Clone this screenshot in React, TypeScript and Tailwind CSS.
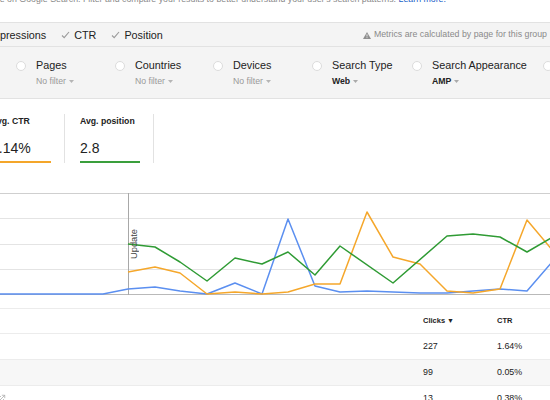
import React from 'react';
import { ExternalLink } from 'lucide-react';

const FONT = { fontFamily: '"Liberation Sans", Arial, Helvetica, sans-serif' };

const CLICKS = '0,295 23,295 50,295 76,295 103,295 128,290 155,288 180,292 207,295 235,284 262,295 288,220 315,287 340,293 367,292 393,293 420,294 447,294 473,292 500,290 527,292 553,262';
const CTR = '128,273 155,268 180,274 207,295 235,293 262,295 288,293 315,285 340,285 367,213 393,258 420,265 447,292 473,294 500,290 527,221 553,252';
const POSITION = '128,245 155,248 180,263 207,282 235,259 262,265 288,253 315,276 340,247 393,284 447,237 473,235 500,238 527,253 553,238';

const filters = [
  { label: 'Pages', value: 'No filter', active: false, width: 'w-[99px]' },
  { label: 'Countries', value: 'No filter', active: false, width: 'w-[98px]' },
  { label: 'Devices', value: 'No filter', active: false, width: 'w-[99px]' },
  { label: 'Search Type', value: 'Web', active: true, width: 'w-[100px]' },
  { label: 'Search Appearance', value: 'AMP', active: true, width: 'w-[131px]' },
  { label: 'Dates', value: 'Last 28 days', active: false, width: 'w-[100px]' },
];

const rows = [
  { clicks: '227', ctr: '1.64%', shaded: false, icon: false },
  { clicks: '99', ctr: '0.05%', shaded: true, icon: false },
  { clicks: '13', ctr: '0.38%', shaded: false, icon: true },
];

const Caret = ({ color }: { color: string }) => (
  <svg width="5" height="3" viewBox="0 0 5 3" className="ml-[3px]">
    <path d="M0 0h5L2.5 3z" fill={color} />
  </svg>
);

const Check = () => (
  <svg width="9" height="8" viewBox="0 0 9 8">
    <path d="M1 4.5l2.2 2.2L8 1" fill="none" stroke="#9a9a9a" strokeWidth="1.1" />
  </svg>
);

export default function App() {
  return (
    <div className="w-[550px] h-[400px] overflow-hidden bg-white text-[#222]" style={FONT}>
      {/* intro text, scrolled off the top */}
      <div className="h-[22px] overflow-hidden">
        <p className="-mt-[6px] ml-[-98px] whitespace-nowrap text-[8.8px] leading-[10px] text-[#8a8a8a]">
          Analyze your performance on Google Search. Filter and compare your results to better understand your user's search patterns.{' '}
          <span className="text-[#1a5fc8]">Learn more.</span>
        </p>
      </div>

      {/* metric toggles + filters */}
      <div className="bg-[#f4f4f4] border-y border-[#e2e2e2]">
        <div className="h-[24px] pt-[1px] flex items-center justify-between border-b border-[#e2e2e2]">
          <div className="flex items-center gap-[15px] ml-[-12px] text-[10.8px]">
            <span>Impressions</span>
            <span className="flex items-center gap-[4px]">
              <Check />
              CTR
            </span>
            <span className="flex items-center gap-[4px]">
              <Check />
              Position
            </span>
          </div>
          <div className="flex items-center gap-[3px] pr-[3px] text-[8.8px] text-[#8a8a8a]">
            <svg width="8" height="7" viewBox="0 0 8 7">
              <path d="M4 0L8 7H0z" fill="#8f8f8f" />
              <path d="M4 2.3v2.2M4 5.3v0.8" stroke="#f4f4f4" strokeWidth="0.9" />
            </svg>
            Metrics are calculated by page for this group
          </div>
        </div>
        <div className="h-[51px] flex pl-[16px] pt-[12px] whitespace-nowrap">
          {filters.map((f) => (
            <div key={f.label} className={`${f.width} shrink-0 flex gap-[10px]`}>
              <div className="h-[13px] flex items-center">
                <span className="w-[10px] h-[10px] rounded-full bg-white border border-[#dcdcdc]" />
              </div>
              <div>
                <div className="text-[10.8px] leading-[13px]">{f.label}</div>
                <div
                  className={`mt-[4px] flex items-center text-[8.7px] leading-[10px] ${
                    f.active ? 'font-bold text-[#222]' : 'text-[#999]'
                  }`}
                >
                  {f.value}
                  <Caret color={f.active ? '#aaa' : '#b5b5b5'} />
                </div>
              </div>
            </div>
          ))}
        </div>
      </div>

      {/* summary cards */}
      <div className="h-[94px] pt-[15px]">
        <div className="flex ml-[-24px]">
          <div className="w-[89px] h-[49px] border-r border-[#e2e2e2] pl-[15px] pt-[1px]">
            <div className="text-[8.7px] leading-[12px] font-bold">Avg. CTR</div>
            <div className="mt-[13px] text-[14px] leading-[16px]">1.14%</div>
            <div className="mt-[5px] w-[60px] h-[2px] bg-[#f4a62a]" />
          </div>
          <div className="w-[89px] h-[49px] border-r border-[#e2e2e2] pl-[15px] pt-[1px]">
            <div className="text-[8.7px] leading-[12px] font-bold">Avg. position</div>
            <div className="mt-[13px] text-[14px] leading-[16px]">2.8</div>
            <div className="mt-[5px] w-[60px] h-[2px] bg-[#3a9f3c]" />
          </div>
        </div>
      </div>

      {/* chart */}
      <div className="relative h-[102px]">
        <svg width="550" height="102" viewBox="0 194 550 102" className="block">
          <line x1="0" y1="194.5" x2="550" y2="194.5" stroke="#cfcfcf" />
          {[219.5, 245.5, 270.5].map((y) => (
            <line key={y} x1="0" y1={y} x2="550" y2={y} stroke="#e4e4e4" />
          ))}
          <line x1="0" y1="295.5" x2="550" y2="295.5" stroke="#b9b9b9" />
          <line x1="128.5" y1="194" x2="128.5" y2="296" stroke="#a8a8a8" />
          <polyline points={CLICKS} fill="none" stroke="#5b8ff0" strokeWidth="1.5" strokeLinejoin="round" />
          <polyline points={CTR} fill="none" stroke="#f5a72b" strokeWidth="1.5" strokeLinejoin="round" />
          <polyline points={POSITION} fill="none" stroke="#2f9b34" strokeWidth="1.5" strokeLinejoin="round" />
        </svg>
        <span className="absolute left-[130px] top-[36px] [writing-mode:vertical-rl] rotate-180 text-[9.3px] leading-[9px] text-[#444]">
          Update
        </span>
      </div>

      {/* table */}
      <div className="mt-[13px] border-t border-[#ececec]">
        <div className="h-[25px] flex items-center border-b border-[#ececec] text-[7.5px] font-bold">
          <div className="flex-1" />
          <div className="w-[74px] flex items-center gap-[2px]">
            Clicks<span className="text-[7px]">▼</span>
          </div>
          <div className="w-[53px]">CTR</div>
        </div>
        {rows.map((r) => (
          <div
            key={r.clicks}
            className={`h-[26px] flex items-center border-b border-[#ececec] text-[8.9px] ${
              r.shaded ? 'bg-[#f7f7f7]' : ''
            }`}
          >
            <div className="flex-1">
              {r.icon && <ExternalLink size={10} className="ml-[-4px] text-[#b0b0b0]" />}
            </div>
            <div className="w-[74px]">{r.clicks}</div>
            <div className="w-[53px]">{r.ctr}</div>
          </div>
        ))}
      </div>
    </div>
  );
}
